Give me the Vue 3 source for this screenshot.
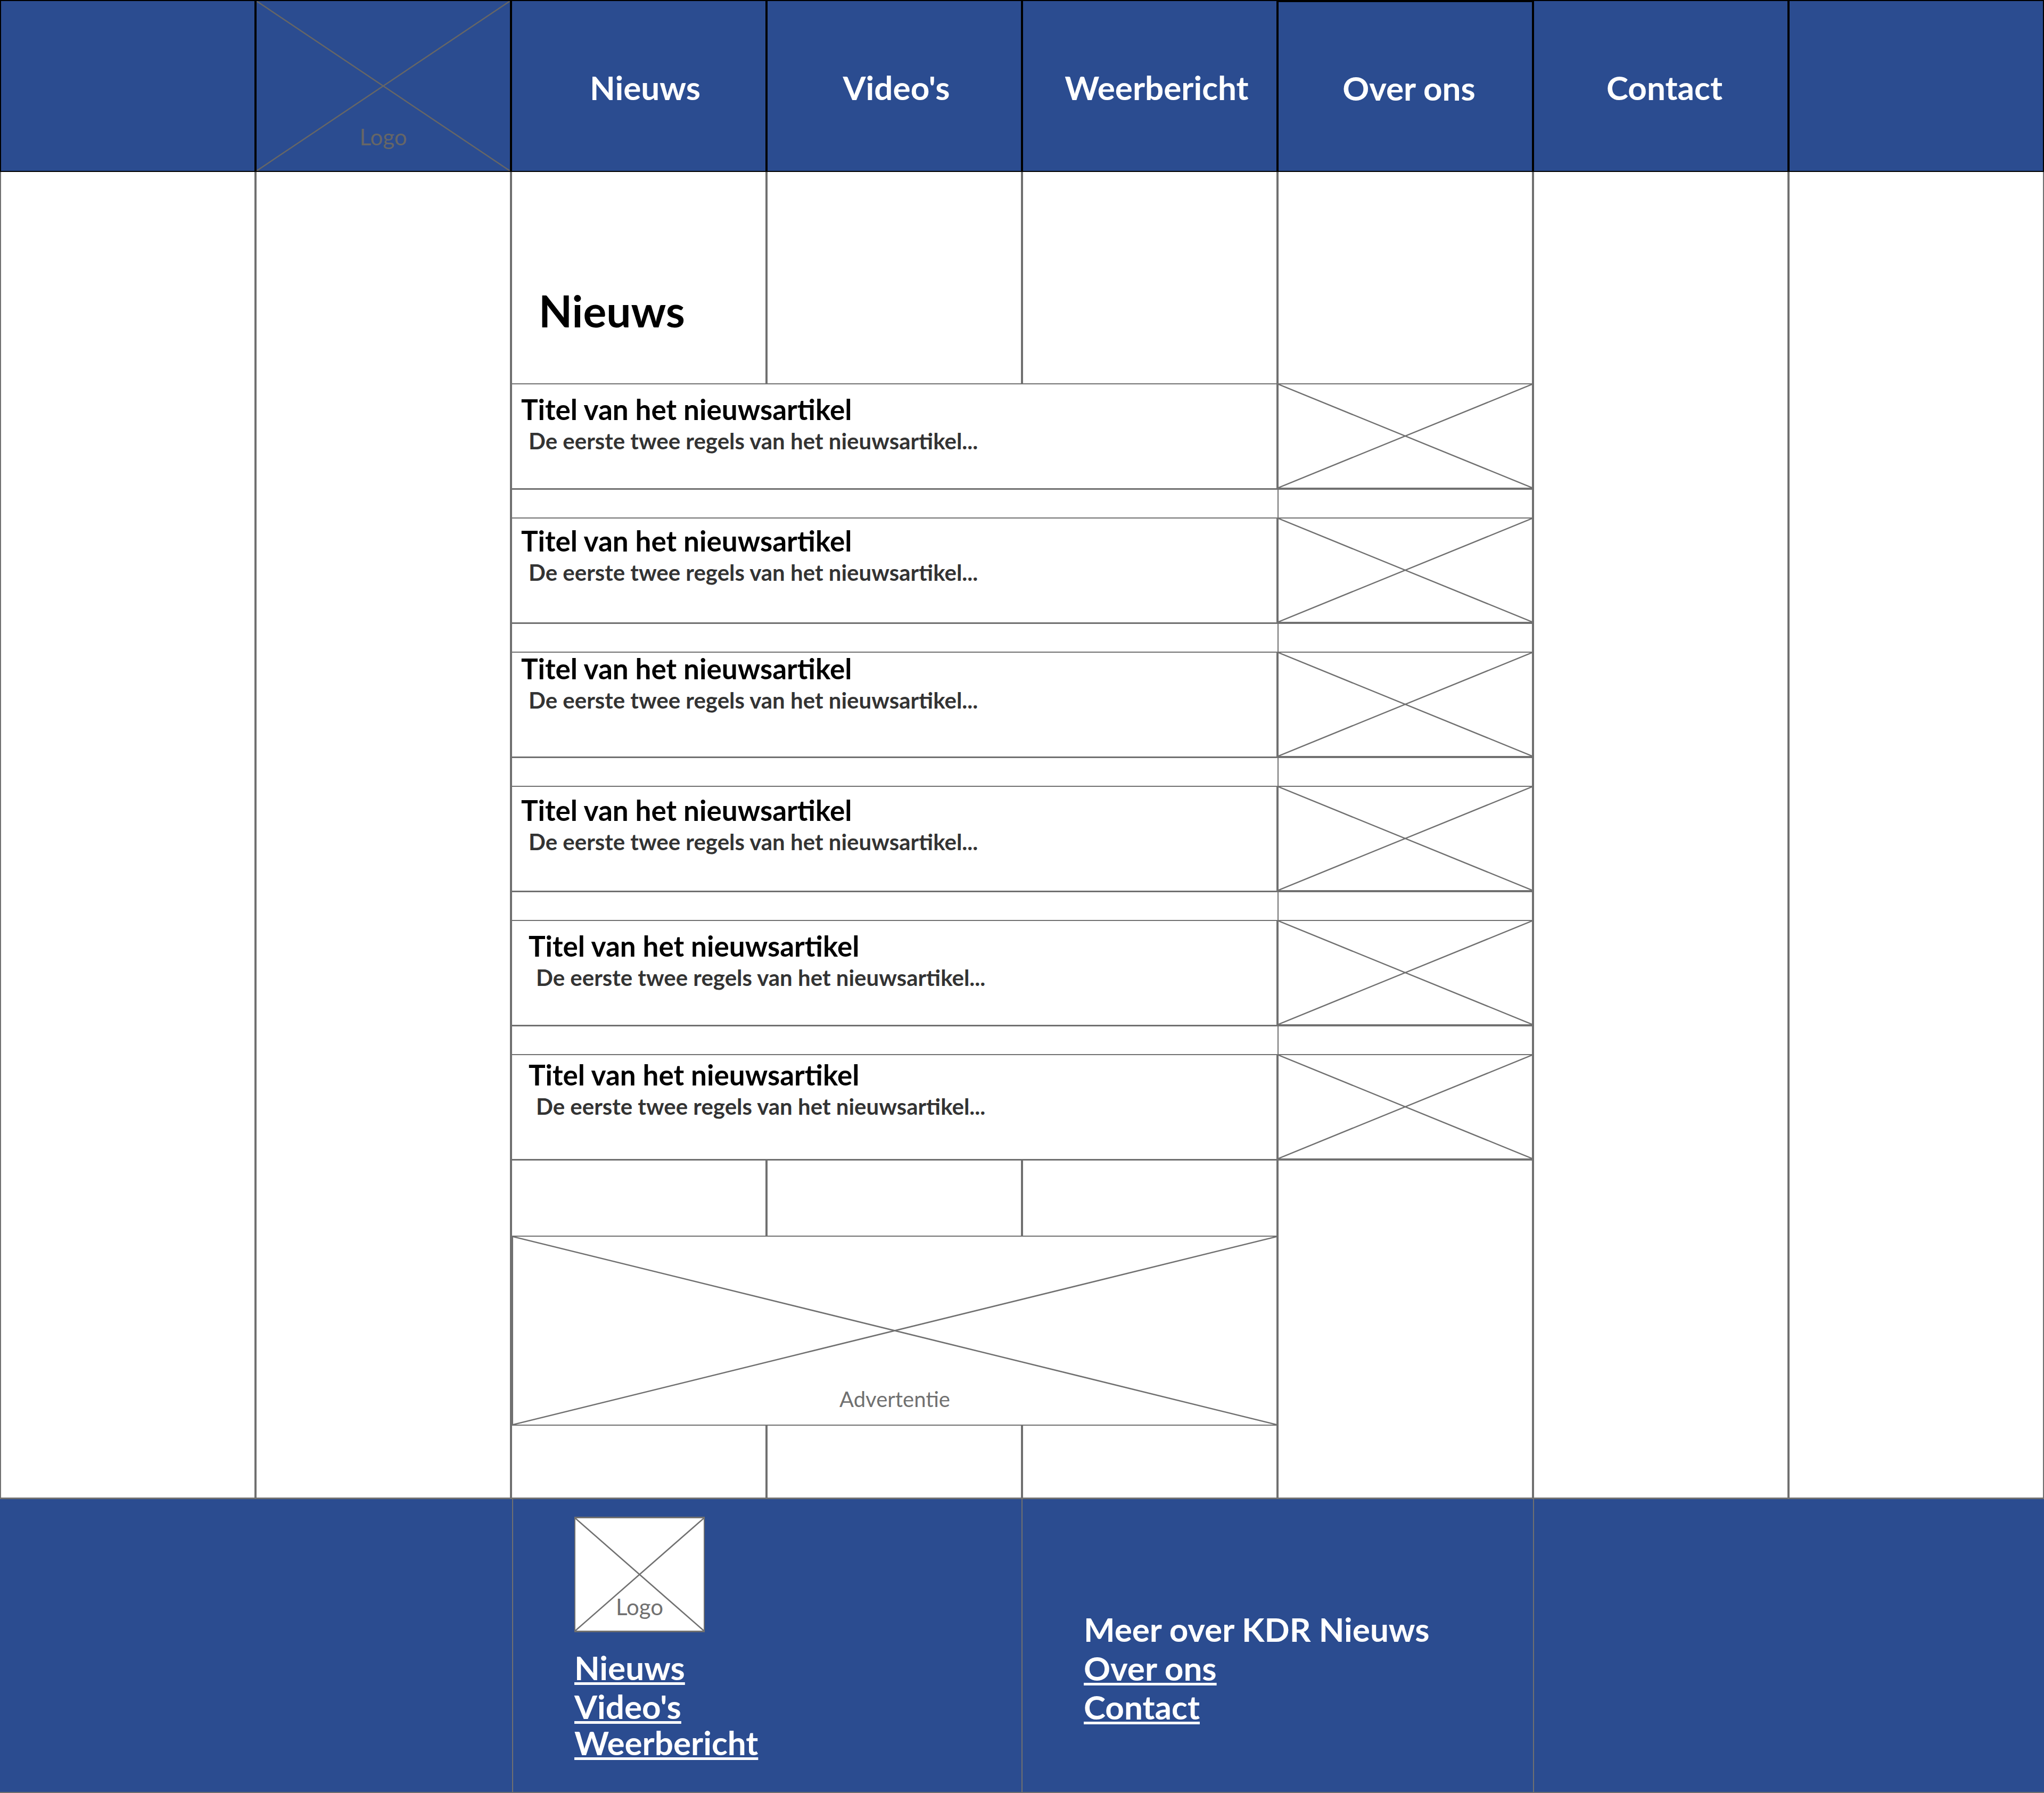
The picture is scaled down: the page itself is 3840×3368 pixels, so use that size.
<script setup>
const navItems = [
  { label: '', shift: 0 },
  { label: '', shift: 0, logo: true },
  { label: 'Nieuws', shift: 24 },
  { label: "Video's", shift: 8 },
  { label: 'Weerbericht', shift: 26 },
  { label: 'Over ons', shift: 14, raised: true },
  { label: 'Contact', shift: 14 },
  { label: '', shift: 0 },
]

// pad is the distance of the title from the top of its row, they differ per row
const articles = [
  { pad: 18, indent: 17 },
  { pad: 13, indent: 17 },
  { pad: 1, indent: 17 },
  { pad: 15, indent: 17 },
  { pad: 18, indent: 31 },
  { pad: 8, indent: 31 },
]
</script>

<template>
  <div class="page">
    <header class="topbar">
      <div
        v-for="(item, i) in navItems"
        :key="i"
        class="topbar__cell"
        :class="{ 'topbar__cell--raised': item.raised }"
        :style="{ paddingLeft: item.shift + 'px' }"
      >
        <template v-if="item.logo">
          <svg class="cross cross--dark" viewBox="0 0 100 100" preserveAspectRatio="none">
            <line x1="0" y1="0" x2="100" y2="100" />
            <line x1="100" y1="0" x2="0" y2="100" />
          </svg>
          <span class="topbar__logo">Logo</span>
        </template>
        <a v-else class="topbar__link">{{ item.label }}</a>
      </div>
    </header>

    <main class="content">
      <div class="content__side"></div>
      <div class="content__side"></div>

      <div class="content__center">
        <div class="row row--heading">
          <div class="cell cell--title"><h1>Nieuws</h1></div>
          <div class="cell"></div>
          <div class="cell"></div>
          <div class="cell"></div>
        </div>

        <template v-for="(article, i) in articles" :key="i">
          <div class="row row--article">
            <div class="article" :style="{ paddingTop: article.pad + 'px', paddingLeft: article.indent + 'px' }">
              <h2>Titel van het nieuwsartikel</h2>
              <p>De eerste twee regels van het nieuwsartikel...</p>
            </div>
            <div class="thumb">
              <svg class="cross" viewBox="0 0 100 100" preserveAspectRatio="none">
                <line x1="0" y1="0" x2="100" y2="100" />
                <line x1="100" y1="0" x2="0" y2="100" />
              </svg>
            </div>
          </div>
          <div v-if="i < articles.length - 1" class="row row--gap">
            <div class="gap gap--left"></div>
            <div class="gap gap--right"></div>
          </div>
        </template>

        <div class="lower">
          <div class="lower__main">
            <div class="row row--filler">
              <div class="cell"></div>
              <div class="cell"></div>
              <div class="cell"></div>
            </div>
            <div class="advert">
              <svg class="cross" viewBox="0 0 100 100" preserveAspectRatio="none">
                <line x1="0" y1="0" x2="100" y2="100" />
                <line x1="100" y1="0" x2="0" y2="100" />
              </svg>
              <span class="advert__label">Advertentie</span>
            </div>
            <div class="row row--filler row--last">
              <div class="cell"></div>
              <div class="cell"></div>
              <div class="cell"></div>
            </div>
          </div>
          <div class="lower__side"></div>
        </div>
      </div>

      <div class="content__side"></div>
      <div class="content__side"></div>
    </main>

    <footer class="footer">
      <div class="footer__col"></div>
      <div class="footer__col footer__col--links">
        <div class="footer__logo">
          <svg class="cross" viewBox="0 0 100 100" preserveAspectRatio="none">
            <line x1="0" y1="0" x2="100" y2="100" />
            <line x1="100" y1="0" x2="0" y2="100" />
          </svg>
          <span>Logo</span>
        </div>
        <a class="footer__link">Nieuws</a>
        <a class="footer__link">Video's</a>
        <a class="footer__link footer__last">Weerbericht</a>
      </div>
      <div class="footer__col footer__col--about">
        <strong class="footer__link">Meer over KDR Nieuws</strong>
        <a class="footer__link">Over ons</a>
        <a class="footer__link">Contact</a>
      </div>
      <div class="footer__col"></div>
    </footer>
  </div>
</template>

<style scoped>
.page {
  width: 3840px;
  height: 3368px;
  display: flex;
  flex-direction: column;
  background: #fff;
  font-family: Lato, "Open Sans", sans-serif;
}

.cross {
  position: absolute;
  inset: 0;
  width: 100%;
  height: 100%;
}
.cross line {
  stroke: #707070;
  stroke-width: 2.5;
  vector-effect: non-scaling-stroke;
}
.cross--dark line {
  stroke: #666;
}

.topbar {
  height: 322px;
  flex: none;
  display: grid;
  grid-template-columns: repeat(8, 480px);
  background: #2b4c90;
}
.topbar__cell {
  position: relative;
  box-sizing: border-box;
  border: 2px solid #000;
  display: flex;
  align-items: center;
  justify-content: center;
}
.topbar__cell--raised {
  border-top-width: 4px;
  height: 323px;
}
.topbar__link {
  position: relative;
  top: 2px;
  color: #fff;
  font-size: 62px;
  font-weight: 700;
}
.topbar__logo {
  position: absolute;
  left: 0;
  right: 0;
  bottom: 39px;
  text-align: center;
  color: #666;
  font-size: 42px;
}

.content {
  flex: 1;
  display: grid;
  grid-template-columns: repeat(2, 480px) 1920px repeat(2, 480px);
}
.content__side {
  box-sizing: border-box;
  border: solid #707070;
  border-width: 0 2px;
}
.content__center {
  display: flex;
  flex-direction: column;
}

.row {
  display: grid;
  flex: none;
}
.cell {
  box-sizing: border-box;
  border: solid #707070;
  border-width: 0 2px;
}
.row--heading {
  height: 398px;
  grid-template-columns: repeat(4, 480px);
}
.cell--title {
  display: flex;
  align-items: center;
  padding: 124px 0 0 50px;
}
.cell--title h1 {
  margin: 0;
  font-size: 82px;
  font-weight: 700;
  color: #000;
}
.row--article {
  height: 200px;
  grid-template-columns: 1440px 480px;
}
.row--gap {
  height: 52px;
  grid-template-columns: 1440px 480px;
}
.gap {
  box-sizing: border-box;
  border-style: solid;
  border-color: #707070;
}
.gap--left {
  border-width: 0 0 0 2px;
}
.gap--right {
  border-width: 0 2px;
}
.article {
  box-sizing: border-box;
  border: solid #707070;
  border-width: 2px 2px 3px 2px;
}
.article h2 {
  margin: -6px 0 0;
  font-size: 53px;
  line-height: 70px;
  font-weight: 700;
  color: #000;
}
.article p {
  margin: -2px 0 0 14px;
  font-size: 42px;
  line-height: 52px;
  font-weight: 700;
  color: #333;
}
.thumb {
  position: relative;
  box-sizing: border-box;
  border: solid #707070;
  border-width: 2px 2px 4px 2px;
}

.lower {
  flex: 1;
  display: grid;
  grid-template-columns: 1440px 480px;
}
.lower__main {
  display: flex;
  flex-direction: column;
}
.lower__side {
  box-sizing: border-box;
  border: solid #707070;
  border-width: 0 2px;
}
.row--filler {
  height: 141px;
  grid-template-columns: repeat(3, 480px);
}
.row--last {
  height: auto;
  flex: 1;
}
.advert {
  position: relative;
  flex: none;
  height: 357px;
  box-sizing: border-box;
  border: solid #707070;
  border-width: 2px 2px 2px 4px;
}
.advert__label {
  position: absolute;
  left: 0;
  right: 0;
  bottom: 24px;
  text-align: center;
  color: #707070;
  font-size: 40px;
}

.footer {
  height: 555px;
  flex: none;
  display: grid;
  grid-template-columns: 962px 957px 961px 960px;
  box-sizing: border-box;
  background: #2b4c90;
  border-top: 3px solid #707070;
  border-bottom: 2px solid #707070;
}
.footer__col {
  box-sizing: border-box;
  border-left: 2px solid #707070;
  color: #fff;
  display: flex;
  flex-direction: column;
  align-items: flex-start;
}
.footer__col:first-child {
  border-left: 0;
}
.footer__link {
  font-size: 62px;
  line-height: 73px;
  font-weight: 700;
  color: #fff;
}
a.footer__link {
  text-decoration: underline;
  text-decoration-thickness: 5px;
  text-underline-offset: 4px;
}
.footer__col--links {
  padding: 33px 0 0 115px;
}
.footer__last {
  margin-top: -5px;
}
.footer__col--about {
  padding: 84px 0 0 115px;
  justify-content: center;
}
.footer__logo {
  position: relative;
  box-sizing: border-box;
  width: 245px;
  height: 217px;
  margin-bottom: 30px;
  background: #fff;
  border: solid #707070;
  border-width: 3px 2px;
  color: #707070;
  font-size: 42px;
  line-height: 1;
}
.footer__logo span {
  position: absolute;
  left: 0;
  right: 0;
  bottom: 24px;
  text-align: center;
}
</style>
